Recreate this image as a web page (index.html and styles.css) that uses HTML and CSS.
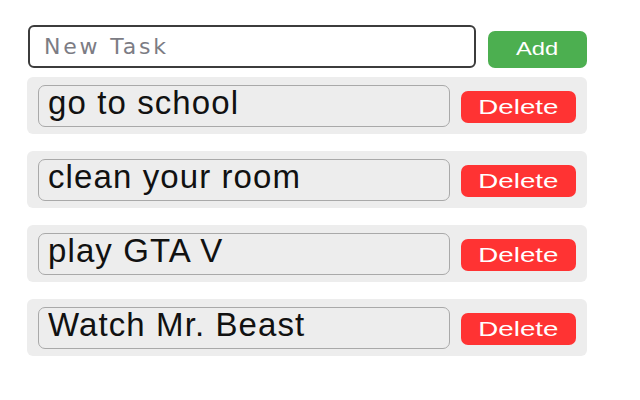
FILE: index.html
```html
<!DOCTYPE html>
<html lang="en">
<head>
<meta charset="utf-8">
<title>Todo</title>
<link rel="stylesheet" href="styles.css">
</head>
<body>
<div class="app">
  <form class="new-task">
    <input class="new-input" type="text" placeholder="New Task">
    <button class="btn btn-add" type="button"><span class="btn-label">Add</span></button>
  </form>
  <ul class="tasks">
    <li class="task"><input class="task-input" type="text" value="go to school"><button class="btn btn-del" type="button"><span class="btn-label">Delete</span></button></li>
    <li class="task"><input class="task-input" type="text" value="clean your room"><button class="btn btn-del" type="button"><span class="btn-label">Delete</span></button></li>
    <li class="task"><input class="task-input" type="text" value="play GTA V"><button class="btn btn-del" type="button"><span class="btn-label">Delete</span></button></li>
    <li class="task"><input class="task-input" type="text" value="Watch Mr. Beast"><button class="btn btn-del" type="button"><span class="btn-label">Delete</span></button></li>
  </ul>
</div>
</body>
</html>
```
FILE: styles.css
```css
html, body {
  margin: 0;
  padding: 0;
  background: #fff;
}
body {
  font-family: "Liberation Sans", Arial, sans-serif;
}
.app {
  width: 560px;
  padding: 25px 0 0 27px;
}
.new-task {
  display: flex;
  align-items: flex-end;
  margin: 0;
}
.new-input {
  box-sizing: border-box;
  width: 448px;
  height: 43px;
  margin: 0 0 0 1px;
  padding: 0 14px;
  border: 2px solid #3c3c3c;
  border-radius: 6px;
  background: #fff;
  font-family: "DejaVu Sans", sans-serif;
  font-size: 22px;
  letter-spacing: 2.8px;
  outline: none;
}
.new-input::placeholder {
  color: #7c7c84;
  opacity: 1;
}
.btn {
  border: none;
  color: #fff;
  font-family: "Liberation Sans", Arial, sans-serif;
  padding: 0;
  cursor: pointer;
}
.btn-label {
  display: inline-block;
  transform: scaleX(1.32);
}
.btn-add {
  width: 99px;
  height: 37px;
  margin-left: 12px;
  background: #4caf50;
  border-radius: 7px;
  font-size: 18px;
}
.tasks {
  list-style: none;
  margin: 9px 0 0;
  padding: 0;
  display: flex;
  flex-direction: column;
  gap: 17px;
}
.task {
  display: flex;
  align-items: center;
  height: 57px;
  box-sizing: border-box;
  padding: 0 11px;
  background: #ededed;
  border-radius: 6px;
}
.task-input {
  box-sizing: border-box;
  width: 412px;
  height: 42px;
  margin: 0;
  padding: 0 9px 6px;
  border: 1px solid #a9a9a9;
  border-radius: 7px;
  background: #ededed;
  color: #111;
  font-family: "Liberation Sans", Arial, sans-serif;
  font-size: 33px;
  letter-spacing: 1.1px;
  outline: none;
}
.btn-del {
  width: 115px;
  height: 32px;
  margin-left: 11px;
  margin-top: 2px;
  background: #ff3333;
  border-radius: 7px;
  font-size: 21px;
}
```
